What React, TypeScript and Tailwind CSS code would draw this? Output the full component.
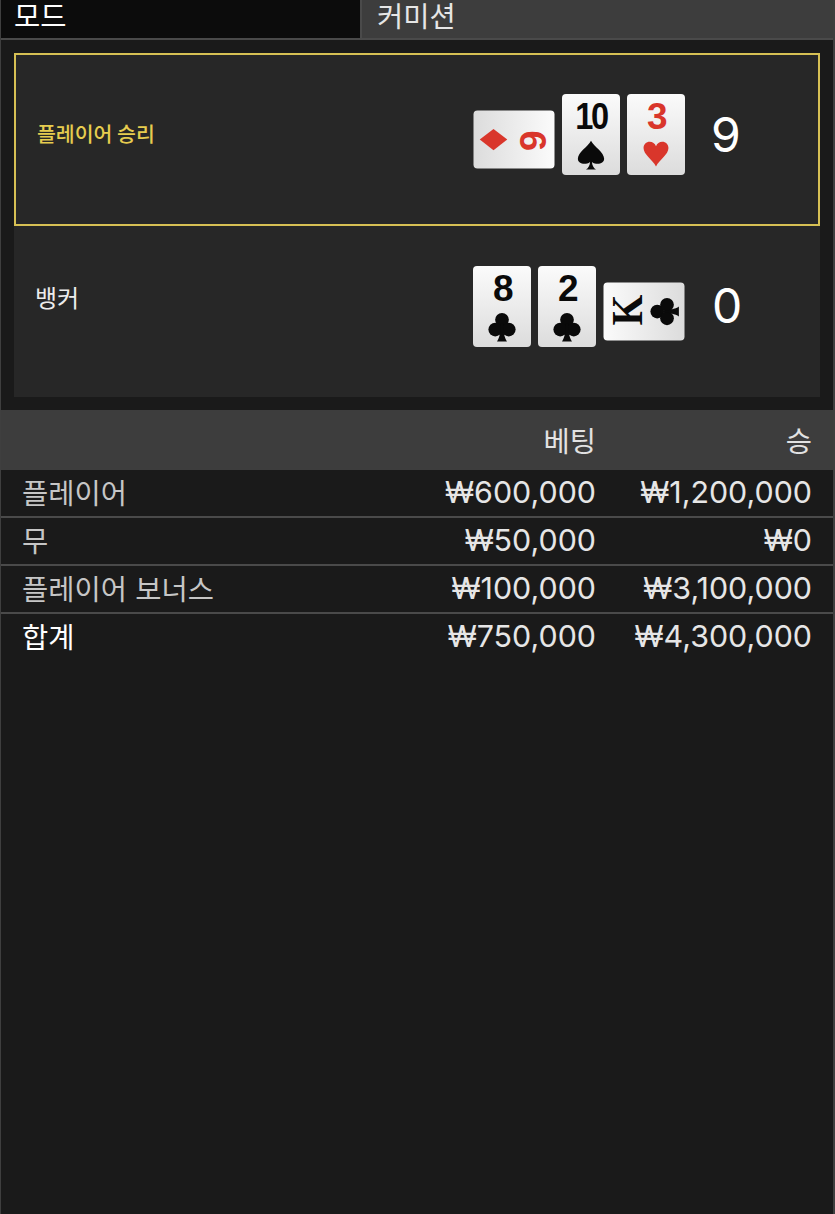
const kr = '"Noto Sans CJK KR", sans-serif';

function Suit({ kind }: { kind: string }) {
  if (kind === 'diamond') {
    return (
      <svg viewBox="0 0 24 24" className="h-[30px] w-[30px] text-[#d9362b]" fill="currentColor">
        <path d="M12 1 L20.5 12 L12 23 L3.5 12 Z" />
      </svg>
    );
  }
  if (kind === 'heart') {
    return (
      <svg viewBox="0 0 24 24" className="mt-[1px] h-[26px] w-[26px] text-[#d9362b]" fill="currentColor">
        <path d="M12 23.5 C8.5 17 0.5 12.5 0.5 6.5 C0.5 3 3 0.7 6.2 0.7 C8.8 0.7 11 2.2 12 4.8 C13 2.2 15.2 0.7 17.8 0.7 C21 0.7 23.5 3 23.5 6.5 C23.5 12.5 15.5 17 12 23.5 Z" />
      </svg>
    );
  }
  if (kind === 'spade') {
    return (
      <svg viewBox="0 0 24 24" className="h-[30px] w-[30px] text-[#0a0a0a]" fill="currentColor">
        <path d="M12 0.5 C9.5 5.5 1.5 9.5 1.5 15 C1.5 19 7.5 20.5 11.2 17.5 C11.2 20 10 22.3 8 23.5 L16 23.5 C14 22.3 12.8 20 12.8 17.5 C16.5 20.5 22.5 19 22.5 15 C22.5 9.5 14.5 5.5 12 0.5 Z" />
      </svg>
    );
  }
  return (
    <svg viewBox="0 0 24 24" className="h-[30px] w-[30px] text-[#0a0a0a]" fill="currentColor">
      <circle cx="12" cy="6.2" r="5.5" />
      <circle cx="6.6" cy="14" r="5.5" />
      <circle cx="17.4" cy="14" r="5.5" />
      <path d="M11.2 9 L12.8 9 C12.8 15 14 21 16 23.5 L8 23.5 C10 21 11.2 15 11.2 9 Z" />
    </svg>
  );
}

function CardFace({ rank, suit, red }: { rank: string; suit: string; red?: boolean }) {
  const isKing = rank === 'K';
  return (
    <div className="flex h-[81px] w-[58px] shrink-0 flex-col items-center rounded-[4px] bg-gradient-to-b from-[#fbfbfb] to-[#dcdcdc]">
      <div
        className={`mt-[1px] h-[45px] font-bold tracking-[-0.07em] ${isKing ? 'scale-x-[0.88] text-[45px] leading-[44px]' : 'text-[37px] leading-[44px]'} ${rank === '10' ? 'scale-x-[0.88]' : ''} ${red ? 'text-[#d9362b]' : 'text-[#0a0a0a]'}`}
        style={{ fontFamily: isKing ? '"Liberation Serif", serif' : '"Liberation Sans", sans-serif' }}
      >
        {rank}
      </div>
      <Suit kind={suit} />
    </div>
  );
}

function Card({ rank, suit, red, turn }: { rank: string; suit: string; red?: boolean; turn?: 'cw' | 'ccw' }) {
  if (!turn) {
    return (
      <div className="w-[57px]">
        <CardFace rank={rank} suit={suit} red={red} />
      </div>
    );
  }
  return (
    <div className="mt-[10px] flex h-[58px] w-[81px] items-center justify-center">
      <div className={turn === 'cw' ? 'rotate-90' : '-rotate-90'}>
        <CardFace rank={rank} suit={suit} red={red} />
      </div>
    </div>
  );
}

const rows = [
  { name: '플레이어', bet: '₩600,000', win: '₩1,200,000' },
  { name: '무', bet: '₩50,000', win: '₩0' },
  { name: '플레이어 보너스', bet: '₩100,000', win: '₩3,100,000' },
];

function Row({ name, bet, win, total }: { name: string; bet: string; win: string; total?: boolean }) {
  return (
    <div className={`flex h-[46px] items-center pl-[21px] pr-[21px] font-['Inter'] text-[30.4px] ${total ? 'text-white' : 'text-[#c6c6c6]'}`}>
      <div className="flex-1 pb-[2px] text-[28.5px] [word-spacing:2px]" style={{ fontFamily: kr }}>{name}</div>
      <div className="w-[200px] text-right text-[#e6e6e6]">{bet}</div>
      <div className="w-[216px] text-right text-[#e6e6e6]">{win}</div>
    </div>
  );
}

export default function App() {
  return (
    <div className="h-[1214px] overflow-hidden border-l border-r-2 border-[#3f3f3f] bg-[#1a1a1a]" style={{ fontFamily: kr }}>
      {/* Tabs */}
      <div className="flex h-[40px] border-b-2 border-[#4a4a4a]">
        <div className="w-[359px] bg-[#0c0c0c] pl-[13px] text-[28.5px] leading-[29px] text-white">모드</div>
        <div className="flex-1 border-l-2 border-[#4a4a4a] bg-[#3d3d3d] pl-[15px] text-[28.5px] leading-[29px] text-[#e6e6e6]">커미션</div>
      </div>

      {/* Result */}
      <div className="mr-[13px] ml-[13px] mt-[13px] h-[344px] bg-[#272727]">
        <div className="flex h-[173px] items-center border-2 border-[#d6c054] pb-[10px]">
          <div className="flex-1 pb-[3px] pl-[21px] text-[20.5px] font-medium text-[#e6cc4f]">플레이어 승리</div>
          <div className="flex items-center gap-[8px]">
            <Card rank="6" suit="diamond" red turn="cw" />
            <Card rank="10" suit="spade" />
            <Card rank="3" suit="heart" red />
          </div>
          <div className="ml-[27px] w-[107px] font-['Inter'] text-[48px] text-white">9</div>
        </div>
        <div className="flex h-[171px] items-center pb-[11px]">
          <div className="flex-1 pb-[18px] pl-[21px] text-[24px] text-[#ececec]">뱅커</div>
          <div className="flex items-center gap-[8px]">
            <Card rank="8" suit="club" />
            <Card rank="2" suit="club" />
            <Card rank="K" suit="club" turn="ccw" />
          </div>
          <div className="ml-[28px] w-[108px] font-['Inter'] text-[48px] text-white">0</div>
        </div>
      </div>

      {/* Table */}
      <div className="mt-[13px]">
        <div className="flex h-[60px] items-center bg-[#3d3d3d] pr-[21px] text-[28.5px] text-[#e2e2e2]">
          <div className="flex-1" />
          <div className="w-[200px] text-right">베팅</div>
          <div className="w-[216px] text-right">승</div>
        </div>
        {rows.map((r) => (
          <div key={r.name} className="border-b-2 border-[#4a4a4a]">
            <Row name={r.name} bet={r.bet} win={r.win} />
          </div>
        ))}
        <Row name="합계" bet="₩750,000" win="₩4,300,000" total />
      </div>
    </div>
  );
}
